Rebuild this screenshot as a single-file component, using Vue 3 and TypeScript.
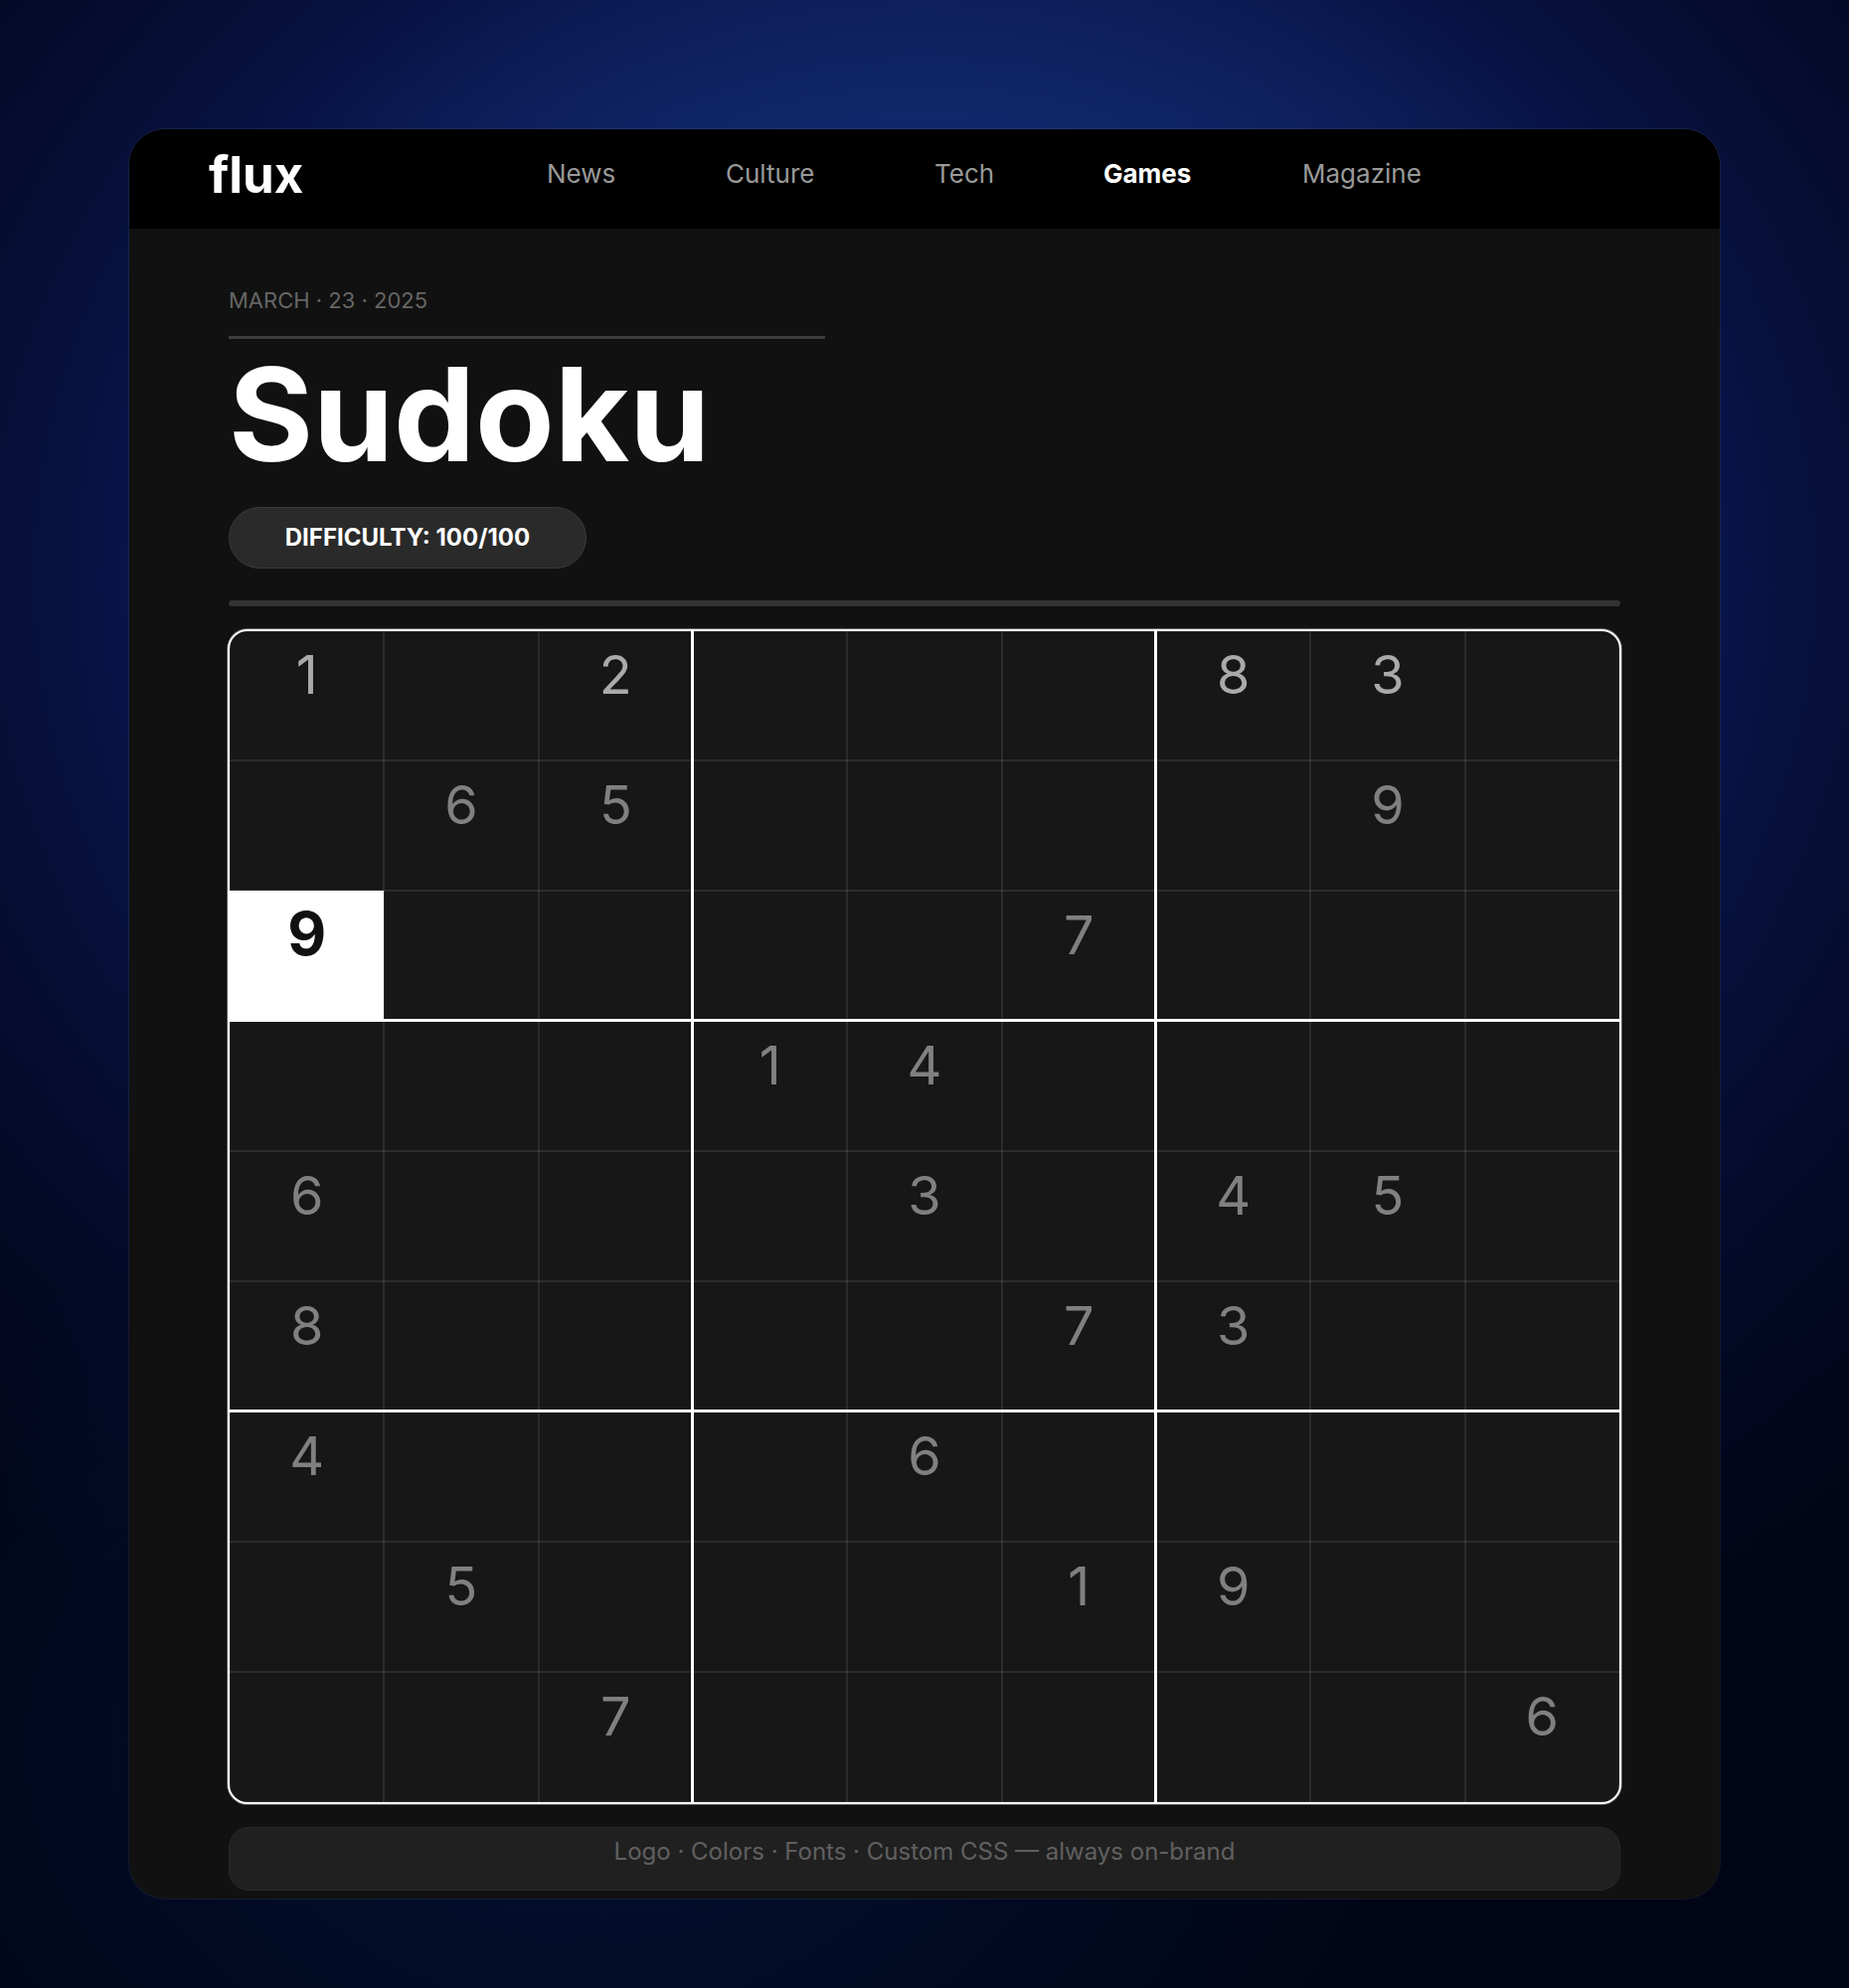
<script setup lang="ts">
interface NavItem {
  label: string
  active?: boolean
}

const navItems: NavItem[] = [
  { label: 'News' },
  { label: 'Culture' },
  { label: 'Tech' },
  { label: 'Games', active: true },
  { label: 'Magazine' },
]

// One string per row, a dot marks an empty cell
const rows: string[][] = [
  '1.2...83.',
  '.65....9.',
  '9....7...',
  '...14....',
  '6...3.45.',
  '8....73..',
  '4...6....',
  '.5...19..',
  '..7.....6',
].map((row) => row.split('').map((c) => (c === '.' ? '' : c)))

const isSelected = (r: number, c: number): boolean => r === 2 && c === 0
</script>

<template>
  <div class="page">
    <div class="card">
      <header class="topbar">
        <a class="logo" href="#">flux</a>
        <nav class="nav">
          <a
            v-for="item in navItems"
            :key="item.label"
            href="#"
            :class="{ active: item.active }"
          >{{ item.label }}</a>
        </nav>
      </header>

      <main class="content">
        <p class="date">MARCH · 23 · 2025</p>
        <h1 class="title">Sudoku</h1>
        <p class="pill">DIFFICULTY: 100/100</p>
        <hr class="divider">

        <div class="board">
          <table>
            <tbody>
              <tr v-for="(row, r) in rows" :key="r">
                <td
                  v-for="(value, c) in row"
                  :key="c"
                  :class="{ selected: isSelected(r, c) }"
                >{{ value }}</td>
              </tr>
            </tbody>
          </table>
        </div>

        <footer class="note">Logo · Colors · Fonts · Custom CSS — always on-brand</footer>
      </main>
    </div>
  </div>
</template>

<style>
body {
  margin: 0;
  background: #020617;
}
</style>

<style scoped>
.page {
  box-sizing: border-box;
  min-height: 100vh;
  padding: 130px 130px 90px;
  font-family: Inter, "Liberation Sans", sans-serif;
  color: #fff;
  background:
    radial-gradient(ellipse 45% 30% at 32% 88%, rgba(4, 22, 62, 0.7) 0%, rgba(4, 18, 50, 0) 100%),
    radial-gradient(ellipse 78% 64% at 50% 29%, #143080 0%, #102769 36%, #0d1f5a 46%, #081448 56%, #060f36 65%, #040926 79%, #010516 98%);
}

.card {
  overflow: hidden;
  border-radius: 36px;
  background: #111;
  box-shadow: 0 0 0 1px rgba(255, 255, 255, 0.07);
}

.topbar {
  display: flex;
  box-sizing: border-box;
  height: 100px;
  padding: 13px 80px 0;
  background: #000;
}

.topbar a {
  text-decoration: none;
}

.logo {
  width: 340px;
  font-size: 51px;
  line-height: 66px;
  font-weight: 700;
  color: #fff;
}

.nav {
  display: grid;
  grid-template-columns: 180px 210px 170px 200px auto;
  font-size: 26px;
  line-height: 64px;
}

.nav a {
  color: #999;
}

.nav .active {
  font-weight: 700;
  color: #fff;
}

.content {
  padding: 56px 99px 8px;
}

.date {
  width: 600px;
  margin: 0 1px;
  padding-bottom: 20px;
  border-bottom: 3px solid #3c3c3c;
  font-size: 22px;
  line-height: 32px;
  color: #666;
}

.title {
  margin: 10px 1px 0;
  font-size: 130px;
  line-height: 132px;
  font-weight: 700;
}

.pill {
  box-sizing: border-box;
  width: 360px;
  margin: 27px 1px 32px;
  border: 1px solid #3a3a3a;
  border-radius: 31px;
  font-size: 24px;
  line-height: 60px;
  font-weight: 700;
  text-align: center;
  background: #2a2a2a;
}

.divider {
  height: 6px;
  margin: 0 1px 23px;
  border: 0;
  border-radius: 3px;
  background: #333;
}

.board {
  overflow: hidden;
  border: 2px solid #fff;
  border-radius: 20px;
  background: #171717;
  box-shadow: 0 0 0 1px rgba(255, 255, 255, 0.3);
}

table {
  width: 100%;
  border-spacing: 0;
  table-layout: fixed;
}

/* Each cell draws its half of the rules that it shares with its neighbours */
td {
  --thin: rgba(255, 255, 255, 0.09);
  --left: 1px 0 var(--thin);
  --right: -1px 0 var(--thin);
  --top: 0 1px var(--thin);
  --bottom: 0 -1px var(--thin);
  box-sizing: border-box;
  height: 131px;
  padding: 12px 0 0;
  font-size: 54px;
  line-height: 66px;
  text-align: center;
  vertical-align: top;
  color: #808080;
  box-shadow: inset var(--left), inset var(--right), inset var(--top), inset var(--bottom);
}

/* Heavier rules between the 3×3 boxes */
td:nth-child(3n):not(:last-child) {
  --right: -2px 0 #fff;
}

td:nth-child(3n + 1):not(:first-child) {
  --left: 1px 0 #fff;
}

tr:nth-child(3n):not(:last-child) td {
  --bottom: 0 -2px #fff;
}

tr:nth-child(3n + 1):not(:first-child) td {
  --top: 0 1px #fff;
}

tr:first-child td {
  height: 130px;
  padding-top: 11px;
  color: #aaa;
}

td.selected {
  font-size: 60px;
  line-height: 62px;
  font-weight: 700;
  color: #111;
  background: #fff;
}

.note {
  box-sizing: border-box;
  height: 64px;
  margin: 23px 1px 0;
  border: 1px solid #292929;
  border-radius: 20px;
  font-size: 24px;
  line-height: 48px;
  text-align: center;
  color: #606060;
  background: #202020;
}
</style>
